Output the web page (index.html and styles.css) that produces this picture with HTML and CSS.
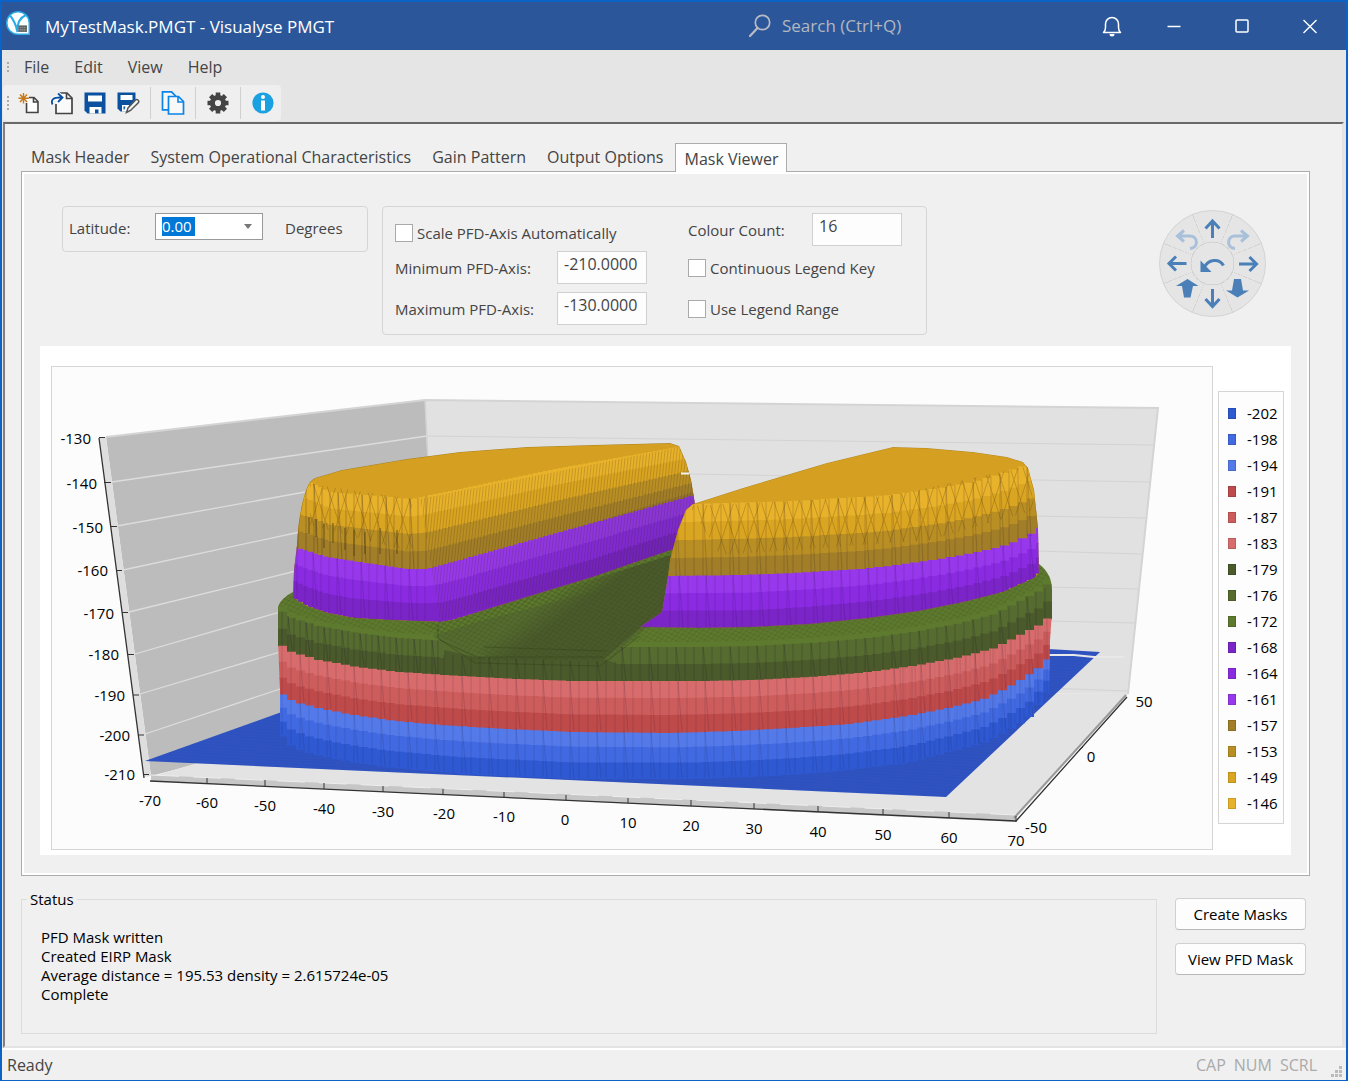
FILE: index.html
```html
<!DOCTYPE html>
<html lang="en">
<head>
<meta charset="utf-8">
<title>MyTestMask.PMGT - Visualyse PMGT</title>
<link rel="stylesheet" href="styles.css">
</head>
<body>
<div class="window">
  <header class="titlebar">
    <svg class="app-logo" viewBox="0 0 24 24" aria-hidden="true">
      <path d="M12 0a12 12 0 1 0 0 24h12V12A12 12 0 0 0 12 0z" fill="#29abe8"/>
      <path d="M12 1.500a10.500 10.500 0 1 0 0 21h10.500V12A10.500 10.500 0 0 0 12 1.500z" fill="#fff"/>
      <path d="M4 4.500C8 9 10 14 11.500 21C11 14 13 7 20 4" fill="none" stroke="#29abe8" stroke-width="2"/>
      <path d="M12.500 14.500h8.500v6.500h-8.500z" fill="#444"/>
      <path d="M13.500 16.200h7M13.500 18.200h7M13.500 20h7" stroke="#ddd" stroke-width="1" stroke-dasharray="1.200 .8"/>
    </svg>
    <h1 class="window-title">MyTestMask.PMGT - Visualyse PMGT</h1>
    <label class="search">
      <svg viewBox="0 0 24 24" class="search-icon" aria-hidden="true"><circle cx="14.500" cy="8.500" r="7.200" fill="none" stroke="#b9bcc4" stroke-width="1.700"/><path d="M9.500 14L2 22" stroke="#b9bcc4" stroke-width="2.200" stroke-linecap="round"/></svg>
      <input type="text" class="search-input" placeholder="Search (Ctrl+Q)" aria-label="Search">
    </label>
    <div class="window-buttons">
      <button type="button" class="bell" aria-label="Notifications"><svg viewBox="0 0 24 24"><path d="M3.500 18.500h17c-1.500-1.500-2-3-2-5V10a6.500 6.500 0 0 0-13 0v3.500c0 2-.5 3.500-2 5z" fill="none" stroke="#fff" stroke-width="1.500" stroke-linejoin="round"/><path d="M9.500 20a2.500 2.500 0 0 0 5 0z" fill="#fff"/></svg></button>
      <button type="button" aria-label="Minimise"><svg viewBox="0 0 24 24"><path d="M5.500 12.500h13" stroke="#fff" stroke-width="1.500"/></svg></button>
      <button type="button" aria-label="Maximise"><svg viewBox="0 0 24 24"><rect x="6" y="6" width="12" height="12" rx="1" fill="none" stroke="#fff" stroke-width="1.500"/></svg></button>
      <button type="button" aria-label="Close"><svg viewBox="0 0 24 24"><path d="M5.500 6l13 13M18.500 6l-13 13" stroke="#fff" stroke-width="1.400"/></svg></button>
    </div>
  </header>

  <nav class="menubar">
    <i class="grip"></i>
    <button type="button">File</button>
    <button type="button">Edit</button>
    <button type="button">View</button>
    <button type="button">Help</button>
  </nav>

  <div class="toolbar">
    <i class="grip"></i>
    <button type="button" aria-label="New"><svg viewBox="0 0 24 24"><path d="M9.500 6.500H17l4 4v11H9.500z" fill="#fff" stroke="#f4f4f4" stroke-width="3"/><path d="M9.500 12v9.500H21v-11l-4-4h-5M16.500 6.500v4.500H21" fill="none" stroke="#444" stroke-width="1.600"/><path d="M6.500 2v10.500M1.500 7.200h10.500M3 3.500l7 7.500M10 3.500l-7 7.500" stroke="#c47a1a" stroke-width="1.400"/></svg></button>
    <button type="button" aria-label="Open"><svg viewBox="0 0 24 24"><path d="M9 2h8l5 5v15.500H6V13" fill="#fafafa" stroke="#444" stroke-width="1.700"/><path d="M16.500 2v5.500H22" fill="none" stroke="#444" stroke-width="1.600"/><path d="M2.500 13.500C.5 9 3 6 11.500 6.500M8 2.500l4.500 4-4.500 4.500" fill="none" stroke="#fff" stroke-width="4"/><path d="M2.500 13.500C.5 9 3 6 11.500 6.500M8 2.500l4.500 4-4.500 4.500" fill="none" stroke="#0b51a0" stroke-width="1.900"/></svg></button>
    <button type="button" aria-label="Save"><svg viewBox="0 0 24 24"><path d="M1.500 1.500h21v21h-18l-3-3z" fill="#0b51a0"/><path d="M5 4.500h14v6H5z" fill="#fff"/><path d="M6.500 16h12v6.500h-3V18.500h-3.500v4H6.500z" fill="#fff"/></svg></button>
    <button type="button" aria-label="Save As"><svg viewBox="0 0 24 24"><path d="M1.500 1.500h18v12l-7 7h-8l-3-3z" fill="#0b51a0"/><path d="M4.500 4h12v5h-12z" fill="#fff"/><path d="M6 14h7v6.500H6z" fill="#fff"/><path d="M7.500 15.500h2l-1 3h-1z" fill="#0b51a0"/><path d="M10.500 21.500l1.500-4.500 7.500-8a2 2 0 0 1 3 2.500l-8 8z" fill="#f5f5f5" stroke="#555" stroke-width="1.500"/></svg></button>
    <i class="separator"></i>
    <button type="button" aria-label="Copy"><svg viewBox="0 0 24 24"><path d="M1.500 .8h9l4 4v14h-13z" fill="#f8f8f8" stroke="#0a84e8" stroke-width="1.700"/><path d="M7.500 5.500h10l5 5V23h-15z" fill="#f8f8f8" stroke="#0a84e8" stroke-width="1.700"/><path d="M17 5.500V11h5.500" fill="none" stroke="#0a84e8" stroke-width="1.600"/></svg></button>
    <i class="separator"></i>
    <button type="button" aria-label="Settings"><svg viewBox="0 0 24 24"><path d="M12 1.500v21M1.500 12h21M4.600 4.600l14.800 14.800M19.400 4.600L4.600 19.400" stroke="#444" stroke-width="4.600"/><circle cx="12" cy="12" r="5.600" fill="#efefef" stroke="#444" stroke-width="5"/></svg></button>
    <i class="separator"></i>
    <button type="button" aria-label="About"><svg viewBox="0 0 24 24"><circle cx="12" cy="12" r="10.600" fill="#1ba1e2"/><circle cx="12" cy="6" r="2" fill="#fff"/><path d="M10 9.500h4v10h-4z" fill="#fff"/></svg></button>
  </div>

  <main class="workspace">
    <div class="tabs" role="tablist">
      <button type="button" role="tab" class="tab">Mask Header</button>
      <button type="button" role="tab" class="tab">System Operational Characteristics</button>
      <button type="button" role="tab" class="tab">Gain Pattern</button>
      <button type="button" role="tab" class="tab">Output Options</button>
      <button type="button" role="tab" class="tab tab-active" aria-selected="true">Mask Viewer</button>
    </div>

    <section class="tab-panel">
      <div class="controls">
        <div class="group latitude">
          <label for="latitude">Latitude:</label>
          <div class="combo">
            <input id="latitude" type="text" value="0.00">
            <button type="button" aria-label="Choose latitude"><svg viewBox="0 0 8 5"><path d="M0 0h8L4 5z" fill="#777"/></svg></button>
          </div>
          <span>Degrees</span>
        </div>
        <div class="group axis">
          <label class="check check-auto"><input type="checkbox">Scale PFD-Axis Automatically</label>
          <label class="count-label" for="colours">Colour Count:</label>
          <input class="field" id="colours" type="text" value="16">
          <label for="axis-min">Minimum PFD-Axis:</label>
          <input class="field" id="axis-min" type="text" value="-210.0000">
          <label class="check check-legend"><input type="checkbox">Continuous Legend Key</label>
          <label for="axis-max">Maximum PFD-Axis:</label>
          <input class="field" id="axis-max" type="text" value="-130.0000">
          <label class="check check-legend"><input type="checkbox">Use Legend Range</label>
        </div>
        <div class="rotate-pad">
          <button type="button" class="faded" aria-label="Roll left"><svg viewBox="0 0 35 35"><path d="M17 25h13c8 0 9 12 0 12.500M24 19.500L17.500 25l6.500 5.500"/></svg></button>
          <button type="button" aria-label="Rotate up"><svg viewBox="35 0 35 35"><path d="M52.500 27V10M45.500 17.500l7-7.500 7 7.500"/></svg></button>
          <button type="button" class="faded" aria-label="Roll right"><svg viewBox="70 0 35 35"><path d="M88 25H75c-8 0-9 12 0 12.500M81 19.500l6.500 5.500-6.500 5.500"/></svg></button>
          <button type="button" aria-label="Rotate left"><svg viewBox="0 35 35 35"><path d="M26.500 52.500H9M16 45.500L9 52.500l7 7"/></svg></button>
          <button type="button" aria-label="Reset view"><svg viewBox="35 35 35 35"><path d="M44 57c4-9 15-10 19.500-2.500" stroke-width="3.500"/><path class="solid" d="M40.500 49.500V61h11z"/></svg></button>
          <button type="button" aria-label="Rotate right"><svg viewBox="70 35 35 35"><path d="M79 53h17.500M89.500 46l7 7-7 7"/></svg></button>
          <button type="button" aria-label="Zoom in"><svg viewBox="0 70 35 35"><path class="solid" d="M27.500 68l11 7h-5.500l-2.500 11.500h-6.500L22 75h-6z"/></svg></button>
          <button type="button" aria-label="Rotate down"><svg viewBox="35 70 35 35"><path d="M52.500 78v17M45.500 88l7 7.500 7-7.500"/></svg></button>
          <button type="button" aria-label="Zoom out"><svg viewBox="70 70 35 35"><path class="solid" d="M74 68h7l2 11.500h6l-11.500 7L66 79.500h6z"/></svg></button>
        </div>
      </div>

      <div class="chart">
        <svg class="plot" viewBox="52 367 1160 482" role="img" aria-label="PFD mask surface">
          <defs>
            <pattern id="weave" width="7" height="5" patternUnits="userSpaceOnUse" patternTransform="rotate(-12)"><path d="M0 5L7 0M0 0l7 5" stroke="#2c3c14" stroke-opacity=".3" stroke-width=".7" fill="none"/></pattern>
            <pattern id="fine" width="3" height="3" patternUnits="userSpaceOnUse" patternTransform="rotate(6)"><path d="M.5 0v3" stroke="#3a2a10" stroke-opacity=".2" stroke-width="1"/></pattern>
            <pattern id="slant" width="13" height="40" patternUnits="userSpaceOnUse"><path d="M0 0L13 40M13 0L0 40" stroke="#5a3c08" stroke-opacity=".3" stroke-width=".9" fill="none"/></pattern>
            <pattern id="floorlines" width="12" height="3" patternUnits="userSpaceOnUse" patternTransform="rotate(3)"><path d="M0 1h12" stroke="#2444a8" stroke-opacity=".35" stroke-width="1"/></pattern>
            <linearGradient id="deep" x1="0" x2="1"><stop offset="0" stop-color="#1c0c38" stop-opacity="0"/><stop offset="1" stop-color="#30204a" stop-opacity=".15"/></linearGradient>
            <linearGradient id="valley" gradientUnits="userSpaceOnUse" x1="545" y1="600" x2="570" y2="635"><stop offset="0" stop-color="#4a5a2b" stop-opacity="0"/><stop offset=".6" stop-color="#4a5a2b"/></linearGradient>
          </defs>
          <path d="M106 437L425 400L440 700L151 776z" fill="#bcbcbc"/>
          <path d="M425 400L1158 408L1128 694L437 690z" fill="#e1e1e1"/>
          <path d="M151 777L437 690L1128 694L1017 817z" fill="#e3e3e3"/>
          <path d="M99 438L106 437L151 776L144 777z" fill="#dedede"/>
          <path d="M151 775L1016 815V822L151 781z" fill="#c6c6c6"/>
          <path d="M151 775L1016 815" stroke="#eee" stroke-dasharray="28 14"/>
          <path d="M106 437L425 400L1158 408L1128 694" fill="none" stroke="#d4d4d4" stroke-width="2"/>
          <path d="M425 400L437 640" stroke="#d2d2d2" stroke-width="1.500"/>
          <path d="M112 482L427 436M117 526L305 492M123 570L300 532M129 612L300 570M135 654L280 612M140 694L280 652M145 734L280 689" stroke="#dcdcdc" stroke-width="1.300" fill="none"/>
          <path d="M427 436L1154 445M690 474L1150 482M1030 516L1146 518M1035 551L1143 554M1045 587L1139 589M1045 621L1136 623M1045 688L1129 691" stroke="#d3d3d3" fill="none"/>
          <path d="M145 761L290 709L1048 649L1100 652L946 797z" fill="#2f54c2"/>
          <path d="M145 761L290 709L1048 649L1100 652L946 797z" fill="url(#floorlines)"/>
          <path d="M1048 655h26l20 2h30" stroke="#e8e8e8" stroke-width="2" fill="none"/>
          <g id="surface"></g>
          <path d="M1014 818L1126 695" stroke="#999" stroke-width="2"/>
          <path d="M99 438L144 778M150 781L1016 821L1127 697" fill="none" stroke="#333" stroke-width="1.300"/>
          <path d="M99 437.500h6M104 482.500h7M110 526.500h7M116 570.500h6M122 612.500h6M128 654.500h6M133 695h6M138 735h6M143 774.500h6M207 778v5M265 780v6M324 783v6M383 786v6M443 789v6M504 792v5M566 795v5M628 798v5M691 800v6M754 803v6M818 806v6M883 809v6M949 812v6M1016 816v6M1079 750l4-3" stroke="#333" fill="none"/>
          <g class="axis-text axis-text-end">
            <text x="91" y="444">-130</text><text x="97" y="489">-140</text><text x="103" y="533">-150</text><text x="108" y="576">-160</text><text x="114" y="619">-170</text><text x="119" y="660">-180</text><text x="125" y="701">-190</text><text x="130" y="741">-200</text><text x="135" y="780">-210</text>
          </g>
          <g class="axis-text axis-text-mid">
            <text x="150" y="806">-70</text><text x="207" y="808">-60</text><text x="265" y="811">-50</text><text x="324" y="814">-40</text><text x="383" y="817">-30</text><text x="444" y="819">-20</text><text x="504" y="822">-10</text><text x="565" y="825">0</text><text x="628" y="828">10</text><text x="691" y="831">20</text><text x="754" y="834">30</text><text x="818" y="837">40</text><text x="883" y="840">50</text><text x="949" y="843">60</text><text x="1016" y="846">70</text>
            <text x="1036" y="833">-50</text><text x="1091" y="762">0</text><text x="1144" y="707">50</text>
          </g>
        </svg>
        <ul class="legend">
          <li><i class="c202"></i>-202</li><li><i class="c198"></i>-198</li><li><i class="c194"></i>-194</li>
          <li><i class="c191"></i>-191</li><li><i class="c187"></i>-187</li><li><i class="c183"></i>-183</li>
          <li><i class="c179"></i>-179</li><li><i class="c176"></i>-176</li><li><i class="c172"></i>-172</li>
          <li><i class="c168"></i>-168</li><li><i class="c164"></i>-164</li><li><i class="c161"></i>-161</li>
          <li><i class="c157"></i>-157</li><li><i class="c153"></i>-153</li><li><i class="c149"></i>-149</li>
          <li><i class="c146"></i>-146</li>
        </ul>
      </div>
    </section>

    <div class="bottom">
      <fieldset class="status">
        <legend>Status</legend>
        <p>PFD Mask written</p>
        <p>Created EIRP Mask</p>
        <p>Average distance = 195.53 density = 2.615724e-05</p>
        <p>Complete</p>
      </fieldset>
      <div class="actions">
        <button type="button">Create Masks</button>
        <button type="button">View PFD Mask</button>
      </div>
    </div>
  </main>

  <footer class="statusbar">
    <span>Ready</span>
    <span class="locks"><span>CAP</span><span>NUM</span><span>SCRL</span></span>
    <svg class="size-grip" viewBox="0 0 12 12" aria-hidden="true"><path d="M9 0h3v3H9zM5 4h3v3H5zM9 4h3v3H9zM1 8h3v3H1zM5 8h3v3H5zM9 8h3v3H9z" fill="#bbb"/></svg>
  </footer>
</div>
<script src="chart.js"></script>
</body>
</html>
```
FILE: styles.css
```css
* { box-sizing: border-box; }
body {
  margin: 0;
  font: 16px/20px "Open Sans", "Noto Sans", sans-serif;
  color: #444;
}
button, input { font: inherit; color: inherit; }
button { border: 0; padding: 0; background: none; }
.window {
  display: flex;
  flex-direction: column;
  min-height: 100vh;
  border: 2px solid #0b63c7;
  background: #e5e5e5;
}

.titlebar {
  display: flex;
  align-items: center;
  height: 48px;
  padding: 0 12px 0 4px;
  background: #2b579a;
  color: #fff;
}
.app-logo { width: 24px; height: 24px; margin-bottom: 6px; }
.window-title { flex: 1; margin: 2px 0 0 15px; font-size: 17px; font-weight: 400; }
.search { display: flex; align-items: center; gap: 10px; width: 346px; }
.search-icon { width: 24px; height: 24px; }
.search-input { width: 160px; padding: 0; border: 0; background: none; font-size: 17px; }
.search-input::placeholder { color: #b3b7bf; opacity: 1; }
.window-buttons { display: flex; gap: 20px; }
.window-buttons button { width: 48px; height: 32px; }
.window-buttons .bell { width: 36px; }
.window-buttons svg { width: 24px; height: 24px; display: block; margin: 0 auto; }

.grip {
  width: 2px;
  height: 10px;
  background: repeating-linear-gradient(#aaa 0 2px, transparent 2px 4px);
}
.menubar { display: flex; align-items: center; gap: 25px; height: 35px; padding: 0 0 2px 5px; }
.menubar .grip { margin-right: -10px; }
.toolbar {
  display: flex;
  align-items: center;
  align-self: flex-start;
  height: 36px;
  margin-left: 1px;
  padding: 0 2px 0 4px;
  border-radius: 4px;
  background: #efefef;
}
.toolbar .grip { height: 14px; margin-right: 3px; }
.toolbar button { width: 33px; height: 32px; }
.toolbar svg { width: 24px; height: 24px; display: block; margin: 0 auto; }
.separator { width: 1px; height: 32px; margin: 0 5px 0 6px; background: #d0d0d0; }

.workspace {
  flex: 1;
  margin: 1px 2px 0 1px;
  padding: 19px 32px 12px 16px;
  border: 2px solid;
  border-color: #696969 #e3e3e3 #e3e3e3 #808080;
  background: #f0f0f0;
}
.tabs { display: flex; height: 28px; position: relative; }
.tab { padding: 0 11px 0 10px; white-space: nowrap; }
.tab-active {
  padding: 1px 8px 0 9px;
  margin-bottom: -1px;
  border: 1px solid #acacac;
  border-bottom: 0;
  background: #fdfdfd;
}
.tab-panel {
  padding: 34px 18px 20px;
  border: 1px solid #acacac;
  box-shadow: inset 0 0 0 2px #fff;
}
.controls { display: flex; align-items: flex-start; gap: 14px; padding: 0 25px 0 22px; margin-bottom: 11px; }
.controls, .status, .actions { font-size: 15px; }
.group { border: 1px solid #d5d5d5; border-radius: 4px; }
.latitude { display: flex; align-items: center; width: 306px; height: 46px; padding: 0 6px 2px; }
.latitude label { width: 86px; }
.combo {
  display: flex;
  align-items: center;
  width: 108px;
  height: 27px;
  margin: 0 22px 4px 0;
  border: 1px solid #999;
  background: #fff;
}
.combo input {
  width: 84px;
  height: 25px;
  padding: 0 0 1px 6px;
  border: 0;
  color: #fff;
  background: linear-gradient(#0078d7, #0078d7) 6px 3px / 33px 19px no-repeat;
}
.combo button { width: 16px; }
.combo svg { width: 8px; height: 5px; display: block; margin: 0 auto; }
.axis {
  display: grid;
  grid-template-columns: 162px 90px 41px 124px 90px;
  grid-template-rows: 38px 41px 33px;
  width: 545px;
  height: 129px;
  padding: 6px 0 0 12px;
}
.axis label { line-height: 34px; white-space: nowrap; }
.check { display: flex; align-items: center; gap: 4px; height: 33px; }
.check input {
  appearance: none;
  width: 18px;
  height: 18px;
  margin: 0;
  border: 1px solid #aaa;
  background: #fff;
}
.check-auto { grid-column: 1 / 4; height: 40px; }
.check-legend { grid-column: 4 / 6; }
.field {
  width: 90px;
  height: 33px;
  padding: 0 6px 8px;
  border: 1px solid #d0d0d0;
  background: #fdfdfd;
  font-size: 16px;
}
.rotate-pad {
  display: grid;
  grid-template-columns: 35px 35px 35px;
  grid-template-rows: 35px 35px 35px;
  width: 107px;
  margin: 4px 0 0 auto;
  border: 1px solid #d3d3d3;
  border-radius: 50%;
  background:
    radial-gradient(circle, #e5e5e5 0 21px, #d3d3d3 21px 22px, transparent 22px),
    repeating-conic-gradient(from 22deg, #d3d3d3 0 1deg, #e5e5e5 1deg 45deg);
}
.rotate-pad button { width: 35px; height: 35px; }
.rotate-pad svg { display: block; width: 35px; height: 35px; overflow: visible; }
.rotate-pad path { fill: none; stroke: #4a7fb8; stroke-width: 3px; }
.rotate-pad .solid { fill: #4a7fb8; stroke: none; }
.rotate-pad .faded path { stroke: #a8c0da; }

.chart { display: flex; align-items: flex-start; gap: 5px; padding: 20px 7px 5px 11px; background: #fff; }
.plot { flex: 1; min-width: 0; border: 1px solid #d5d5d5; background: #fcfcfc; }
.axis-text { font-size: 15px; fill: #000; }
.axis-text-end { text-anchor: end; }
.axis-text-mid { text-anchor: middle; }
.legend {
  width: 66px;
  margin: 25px 0 0;
  padding: 8px 0 7px 9px;
  border: 1px solid #d5d5d5;
  background: #fdfdfd;
  color: #000;
  list-style: none;
  font-size: 15px;
  line-height: 26px;
}
.legend li { display: flex; align-items: center; gap: 11px; }
.legend i { width: 8px; height: 11px; border: 1px solid #0002; }
.c202 { background: #2f59d2; } .c198 { background: #4169e1; } .c194 { background: #547aea; }
.c191 { background: #bf4a4a; } .c187 { background: #cd5c5c; } .c183 { background: #d86c6c; }
.c179 { background: #4a5a2b; } .c176 { background: #556b2f; } .c172 { background: #5e7a2e; }
.c168 { background: #7b24c8; } .c164 { background: #8a2be2; } .c161 { background: #9838ec; }
.c157 { background: #a17e27; } .c153 { background: #b98f24; } .c149 { background: #daa520; }
.c146 { background: #e8b22a; }

.bottom { display: flex; gap: 18px; margin-top: 14px; padding-right: 4px; }
.status {
  flex: 1;
  min-width: 0;
  min-height: 144px;
  margin: 0;
  padding: 19px 19px;
  border: 1px solid #dcdcdc;
  color: #000;
  line-height: 19px;
}
.status legend { margin-left: -14px; padding: 0 3px; }
.status p { margin: 0; }
.actions { display: flex; flex-direction: column; gap: 13px; width: 131px; margin-top: 8px; color: #000; }
.actions button {
  height: 32px;
  border: 1px solid #d0d0d0;
  border-bottom-color: #b8b8b8;
  border-radius: 4px;
  background: #fdfdfd;
  white-space: nowrap;
}
.statusbar {
  display: flex;
  align-items: center;
  height: 32px;
  padding: 0 4px 0 5px;
  border-top: 2px solid #fff;
  background: #f0f0f0;
}
.locks { display: flex; gap: 8px; margin: 0 13px 0 auto; color: #aaa; }
.size-grip { width: 12px; height: 12px; align-self: flex-end; margin-bottom: 2px; }
```
FILE: chart.js
```js
// Draws the PFD surface as stacked colour bands between profile curves.
const surface = document.getElementById('surface');
const NS = 'http://www.w3.org/2000/svg';

const BLUE = ['#547aea', '#4169e1', '#2f59d2'];
const RED = ['#d86c6c', '#cd5c5c', '#bf4a4a'];
const GREEN = ['#5e7a2e', '#556b2f', '#4a5a2b'];
const PURPLE = ['#9838ec', '#8a2be2', '#7b24c8'];
const GOLD = ['#e8b22a', '#daa520', '#b98f24', '#a17e27'];

function add(name, attrs, parent = surface) {
  const node = document.createElementNS(NS, name);
  for (const key in attrs) node.setAttribute(key, attrs[key]);
  return parent.appendChild(node);
}

function at(curve, x) {
  let i = 1;
  while (i < curve.length - 1 && curve[i][0] < x) i++;
  const [x0, y0] = curve[i - 1], [x1, y1] = curve[i];
  const t = Math.max(0, Math.min(1, (x - x0) / (x1 - x0)));
  return y0 + (y1 - y0) * t;
}

function clipped(id, outline) {
  add('path', { d: outline }, add('clipPath', { id }));
  return add('g', { 'clip-path': `url(#${id})` });
}

// Fills the space between two curves with equal bands, in small steps like the mesh cells.
function bands(parent, top, bottom, from, to, colours, step) {
  const level = (x, k) => at(top, x) + (at(bottom, x) - at(top, x)) * k / colours.length;
  colours.forEach((fill, k) => {
    let upper = '', lower = '';
    for (let x = from; x < to; x += step) {
      const end = Math.min(x + step, to), mid = (x + end) / 2;
      upper += `L${x} ${level(mid, k).toFixed(1)}H${end}`;
      lower = `L${end} ${(level(mid, k + 1) + 1).toFixed(1)}H${x}` + lower;
    }
    add('path', { d: 'M' + (upper + lower).slice(1) + 'z', fill }, parent);
  });
}

function ribs(parent, top, bottom, from, to, step, opacity) {
  let d = '';
  for (let x = from; x < to; x += step) {
    d += `M${x} ${at(top, x).toFixed(1)}L${x} ${at(bottom, x).toFixed(1)}`;
    if (Math.round(x / step) % 3 === 0) {
      d += `M${x} ${at(top, x).toFixed(1)}L${x + 4} ${at(bottom, x).toFixed(1)}`;
    }
  }
  add('path', { d, stroke: '#181030', 'stroke-opacity': opacity, 'stroke-width': 0.8, fill: 'none' }, parent);
}

const bodyBottom = [[279, 727], [285, 742], [308, 752], [335, 758], [384, 766], [461, 773], [572, 778], [697, 778], [773, 775], [830, 771], [907, 762], [945, 752], [984, 742], [1007, 730], [1028, 718], [1049, 690]];
const redBottom = [[278, 691], [295, 701], [323, 708], [354, 714], [396, 720], [442, 724], [488, 727], [572, 731], [670, 732], [735, 730], [792, 727], [850, 723], [907, 715], [949, 707], [984, 698], [1007, 687], [1024, 677], [1045, 663], [1051, 652]];
const greenBottom = [[278, 642], [289, 651], [319, 660], [358, 667], [400, 672], [461, 676], [518, 679], [572, 681], [697, 681], [754, 680], [811, 677], [869, 672], [919, 665], [961, 657], [995, 648], [1024, 633], [1045, 622], [1052, 612]];
const skyline = [[278, 500], [1052, 500]];
const shift = (curve, dy) => curve.map(([x, y]) => [x, y + dy]);

// Green shoulder, drawn first so that the red wall trims its lower parts
const shoulder = clipped('shoulder', 'M278 685V607Q281 598 293 592L430 560L680 520L1039 564Q1052 574 1052 590V640L960 690H300z');
bands(shoulder, skyline, shift(greenBottom, -34), 278, 1052, [GREEN[0]], 9);
bands(shoulder, shift(greenBottom, -34), greenBottom, 278, 1052, GREEN.slice(1), 9);
bands(shoulder, skyline, shift(greenBottom, -40), 278, 1052, ['url(#weave)'], 9);
add('path', { d: 'M433 636L470 624L600 590L680 560V600L640 632L610 660L606 684H560L470 662z', fill: GREEN[1] }, shoulder);
add('path', { d: 'M470 618L680 552V600L640 628L603 660H500L455 645L490 636z', fill: 'url(#valley)' }, shoulder);
add('path', { d: 'M444 650L475 657L603 659L618 664V690H444z', fill: GREEN[2] }, shoulder);
add('path', { d: 'M420 622L680 540V600L610 660L475 660z', fill: 'url(#weave)' }, shoulder);
add('path', { d: 'M440 640L476 657H603M484 647L606 651M438 625V638L475 663L600 666L640 636', fill: 'none', stroke: '#36461c', 'stroke-opacity': .5 }, shoulder);
ribs(shoulder, shift(greenBottom, -34), greenBottom, 282, 440, 6, .3);
ribs(shoulder, shift(greenBottom, -20), greenBottom, 444, 620, 9, .22);
ribs(shoulder, shift(greenBottom, -34), greenBottom, 622, 1050, 9, .24);

// Outer wall
const body = clipped('body', 'M278 560H1052V612L1050 640L1048 800H280V690L278 640z');
bands(body, redBottom, bodyBottom, 278, 1052, BLUE, 9);
bands(body, greenBottom, redBottom, 278, 1052, RED, 9);
ribs(body, greenBottom, redBottom, 282, 1050, 9, .18);
ribs(body, redBottom, bodyBottom, 282, 1050, 9, .16);
ribs(body, greenBottom, bodyBottom, 900, 1050, 5, .08);

// Left lobe
const leftOutline = 'M293 598L294 570L297 545Q299 508 307 488Q309 481 315 478L342 470L407 459L460 452L527 447L593 445L670 443L679 446L686 462L691 480L695 504L680 547L593 577L527 597L453 620L440 622L387 620L353 618L327 613L307 606z';
const goldTopL = [[297, 480], [312, 483], [330, 492], [367, 495], [412, 499], [460, 489], [560, 468], [678, 447], [695, 444]];
const purpleTopL = [[295, 547], [327, 557], [353, 561], [407, 569], [427, 569], [460, 560], [560, 532], [695, 495]];
const purpleBottomL = [[293, 597], [307, 605], [327, 612], [353, 617], [387, 619], [440, 621], [453, 619], [527, 597], [593, 577], [643, 559], [695, 543]];
const left = clipped('left-lobe', leftOutline);
add('path', { d: leftOutline, fill: '#d5a021' }, left);
bands(left, goldTopL, purpleTopL, 293, 695, GOLD, 5);
bands(left, purpleTopL, purpleBottomL, 293, 695, PURPLE, 5);
ribs(left, goldTopL, purpleTopL, 298, 428, 8, .3);
ribs(left, purpleTopL, purpleBottomL, 297, 430, 8, .2);
add('path', { d: 'M310 484L412 499V552L310 525z', fill: 'url(#slant)' }, left);
add('path', { d: 'M420 499L680 447L700 500V545L440 621z', fill: 'url(#fine)' }, left);
add('path', { d: 'M470 560L700 490V545L453 620z', fill: 'url(#deep)' }, left);
add('path', { d: 'M309 517v17M316 519v18M324 524v24M333 523v20M345 528v22M354 530v26M365 532v22M380 528v26M397 530v24', stroke: '#4a3a10', 'stroke-opacity': .75 }, left);
add('path', { d: leftOutline, fill: 'none', stroke: '#7c5f14', 'stroke-opacity': .5 }, left);
add('path', { d: 'M681 473.500h8', stroke: '#f4f4f4', 'stroke-width': 2 });

// Right lobe
const rightOutline = 'M640 627L662 612L668 576L670 560L678 530L686 510L693 504L743 488L827 463L893 447L927 448L973 452L1007 457L1023 462L1028 468L1034 490L1038 528L1039 573L1034 578L1003 592L964 602L919 611L869 618L811 624L754 627L700 628z';
const goldTopR = [[660, 504], [693, 504], [793, 501], [860, 497], [890, 495], [940, 488], [973, 482], [1007, 472], [1029, 464], [1040, 460]];
const purpleTopR = [[640, 577], [668, 576], [743, 575], [793, 573], [860, 569], [890, 566], [940, 559], [973, 553], [1000, 547], [1017, 541], [1033, 533], [1039, 527]];
const purpleBottomR = [[640, 628], [754, 628], [811, 624], [869, 618], [919, 611], [964, 602], [1003, 592], [1034, 578], [1040, 570]];
const right = clipped('right-lobe', rightOutline);
add('path', { d: rightOutline, fill: '#d5a021' }, right);
bands(right, goldTopR, purpleTopR, 640, 1040, GOLD, 9);
bands(right, purpleTopR, purpleBottomR, 640, 1040, PURPLE, 9);
ribs(right, goldTopR, purpleTopR, 676, 1036, 9, .22);
ribs(right, purpleTopR, purpleBottomR, 670, 1036, 9, .2);
add('path', { d: 'M690 506L890 496L1029 466L1034 510L930 540L720 555z', fill: 'url(#slant)' }, right);
add('path', { d: rightOutline, fill: 'none', stroke: '#7c5f14', 'stroke-opacity': .4 }, right);
```
